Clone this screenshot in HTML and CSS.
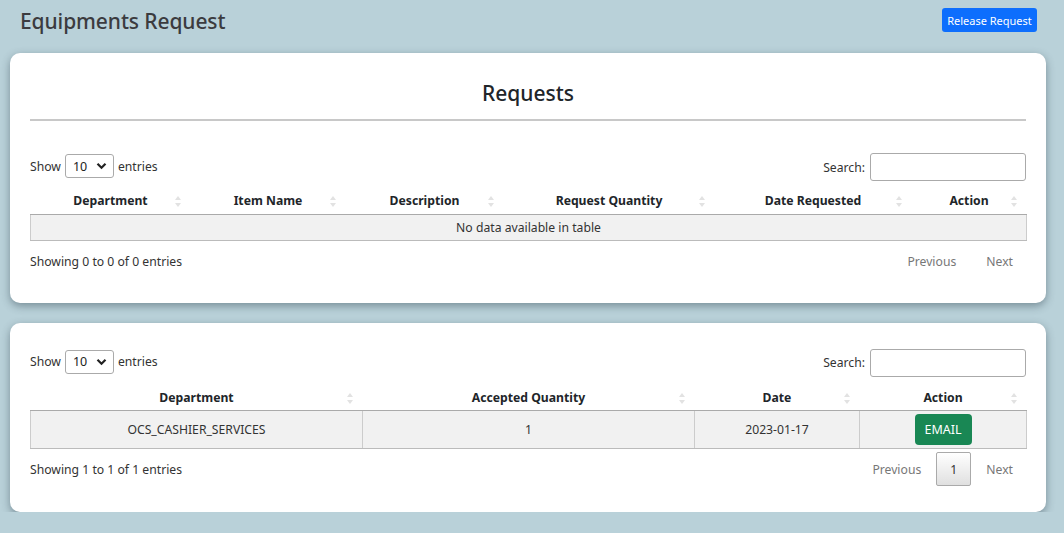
FILE: index.html
```html
<!DOCTYPE html>
<html>
<head>
<meta charset="utf-8">
<link rel="stylesheet" href="styles.css">
</head>
<body>
<div class="page">
  <header class="topbar">
    <h1 class="title">Equipments Request</h1>
    <button class="btn-primary">Release Request</button>
  </header>

  <section class="card">
    <h2 class="card-heading">Requests</h2>
    <hr class="divider">
    <div class="dt-top">
      <label class="dt-length">Show
        <span class="select">10
          <svg width="11" height="8" viewBox="0 0 11 8"><path d="M1.5 1.8 L5.5 5.8 L9.5 1.8" fill="none" stroke="#222" stroke-width="2.2"/></svg>
        </span>
        entries</label>
      <label class="dt-search">Search:<span class="search-input"></span></label>
    </div>
    <table class="dt">
      <colgroup>
        <col style="width:160px"><col style="width:155px"><col style="width:158px"><col style="width:211px"><col style="width:197px"><col style="width:115px">
      </colgroup>
      <thead>
        <tr>
          <th>Department<i class="sort"></i></th>
          <th>Item Name<i class="sort"></i></th>
          <th>Description<i class="sort"></i></th>
          <th>Request Quantity<i class="sort"></i></th>
          <th>Date Requested<i class="sort"></i></th>
          <th>Action<i class="sort"></i></th>
        </tr>
      </thead>
      <tbody>
        <tr class="empty"><td colspan="6">No data available in table</td></tr>
      </tbody>
    </table>
    <div class="dt-bottom">
      <div class="dt-info">Showing 0 to 0 of 0 entries</div>
      <div class="pager">
        <span class="pg disabled">Previous</span>
        <span class="pg disabled">Next</span>
      </div>
    </div>
  </section>

  <section class="card card-second">
    <div class="dt-top">
      <label class="dt-length">Show
        <span class="select">10
          <svg width="11" height="8" viewBox="0 0 11 8"><path d="M1.5 1.8 L5.5 5.8 L9.5 1.8" fill="none" stroke="#222" stroke-width="2.2"/></svg>
        </span>
        entries</label>
      <label class="dt-search">Search:<span class="search-input"></span></label>
    </div>
    <table class="dt dt-data">
      <colgroup>
        <col style="width:332px"><col style="width:332px"><col style="width:165px"><col style="width:167px">
      </colgroup>
      <thead>
        <tr>
          <th>Department<i class="sort"></i></th>
          <th>Accepted Quantity<i class="sort"></i></th>
          <th>Date<i class="sort"></i></th>
          <th>Action<i class="sort"></i></th>
        </tr>
      </thead>
      <tbody>
        <tr>
          <td>OCS_CASHIER_SERVICES</td>
          <td>1</td>
          <td>2023-01-17</td>
          <td><button class="btn-success">EMAIL</button></td>
        </tr>
      </tbody>
    </table>
    <div class="dt-bottom">
      <div class="dt-info">Showing 1 to 1 of 1 entries</div>
      <div class="pager">
        <span class="pg disabled">Previous</span>
        <span class="pg current">1</span>
        <span class="pg disabled">Next</span>
      </div>
    </div>
  </section>
</div>
</body>
</html>
```

FILE: styles.css
```css
* { box-sizing: border-box; }
html, body { margin: 0; padding: 0; }
body {
  background: #b9d1d9;
  font-family: "Noto Sans", "Open Sans", sans-serif;
  font-size: 12.2px;
  color: #333;
}
.page { padding: 0 18px 0 10px; }

.topbar {
  display: flex;
  justify-content: space-between;
  align-items: flex-start;
  height: 53px;
  padding: 0 9px 0 10px;
}
.title {
  margin: 6px 0 0;
  font-size: 21px;
  font-weight: 500;
  color: #3b3b3f;
  line-height: 30px;
  letter-spacing: -0.1px;
}
.btn-primary {
  margin-top: 8px;
  height: 24px;
  width: 95px;
  padding: 0;
  border: none;
  border-radius: 3px;
  background: #0d6efd;
  color: #fff;
  font-family: inherit;
  font-size: 11px;
}

.card {
  background: #fff;
  border-radius: 10px;
  box-shadow: 0 3px 8px rgba(40, 60, 70, 0.45);
  padding: 20px 20px 24px;
}
.card-second { margin-top: 20px; padding-top: 26px; padding-bottom: 26px; }

.card-heading {
  margin: 0;
  text-align: center;
  font-size: 21px;
  font-weight: 500;
  line-height: 40px;
  color: #212529;
}
.divider {
  margin: 6px 0 32px;
  border: none;
  height: 2px;
  background: #c8c8c8;
}

.dt-top {
  display: flex;
  justify-content: space-between;
  align-items: center;
  height: 28px;
}
.dt-length, .dt-search {
  display: flex;
  align-items: center;
  gap: 4px;
  color: #333;
}
.dt-length { margin-top: -2px; }
.select {
  display: inline-flex;
  align-items: center;
  justify-content: space-between;
  width: 49px;
  height: 24px;
  padding: 0 6px 0 7px;
  border: 1px solid #aaa;
  border-radius: 3px;
  color: #222;
  font-size: 12.5px;
}
.search-input {
  display: block;
  width: 156px;
  height: 28px;
  margin-left: 1px;
  border: 1px solid #aaa;
  border-radius: 3px;
}

.dt {
  width: 100%;
  margin-top: 7px;
  border-collapse: collapse;
  table-layout: fixed;
}
.dt.dt-data { margin-top: 8px; }
.dt th {
  position: relative;
  height: 26px;
  padding: 0 4px;
  font-weight: 700;
  color: #212529;
  text-align: center;
  border-bottom: 1px solid #aaa;
  vertical-align: middle;
  white-space: nowrap;
}
.sort {
  position: absolute;
  right: 10px;
  top: 8px;
  width: 6px;
  height: 11px;
}
.sort::before, .sort::after {
  content: "";
  position: absolute;
  left: 0;
  border-left: 3px solid transparent;
  border-right: 3px solid transparent;
}
.sort::before { top: 0; border-bottom: 4px solid #e2e2e2; }
.sort::after { bottom: 0; border-top: 4px solid #e2e2e2; }

.dt td {
  background: #f1f1f1;
  text-align: center;
  color: #333;
  border-bottom: 1px solid #bbb;
}
.dt tbody tr td:first-child { border-left: 1px solid #ccc; }
.dt tbody tr td:last-child { border-right: 1px solid #ccc; }
.dt .empty td { height: 26px; padding: 0; }

.dt-data td {
  height: 38px;
  padding: 0;
  border-right: 1px solid #ccc;
}

.btn-success {
  width: 57px;
  height: 31px;
  border: none;
  border-radius: 4px;
  background: #198754;
  color: #fff;
  font-family: inherit;
  font-size: 12.5px;
  padding: 0;
}

.dt-bottom {
  display: flex;
  justify-content: space-between;
  align-items: center;
  margin-top: 4px;
  height: 34px;
}
.dt-data + .dt-bottom { margin-top: 3px; }
.dt-info { color: #333; }
.pager {
  display: flex;
  align-items: center;
}
.pg {
  display: inline-flex;
  align-items: center;
  justify-content: center;
  height: 34px;
  padding: 0 13px;
  color: #777;
}
.pg.disabled + .pg.disabled { margin-left: 4px; }
.pg.current {
  width: 35px;
  padding: 0;
  margin: 0 2px;
  border: 1px solid #aaa;
  border-radius: 2px;
  background: linear-gradient(#fff, #e0e0e0);
  color: #333;
}
```
